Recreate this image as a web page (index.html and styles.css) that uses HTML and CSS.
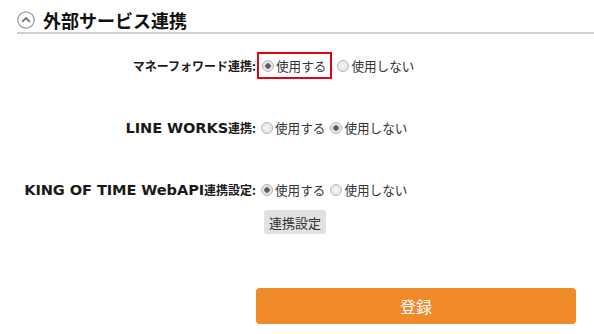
FILE: index.html
```html
<!doctype html>
<html>
    <head>
        <title>外部サービス連携</title>
        <link rel="stylesheet" href="styles.css">
    </head>
    <body>
        <div class="section_head">
            <span class="toggle_icon">
                <svg width="18" height="18" viewBox="0 0 18 18">
                    <circle cx="9" cy="9" r="8.2" fill="#fff" stroke="#a0a0a0" stroke-width="1.3"/>
                    <path d="M5.2 10.8 L9 7 L12.8 10.8" fill="none" stroke="#707070" stroke-width="1.8"/>
                </svg>
            </span>
            <h2>外部サービス連携</h2>
        </div>

        <div class="form_area">
            <div class="form_row">
                <div class="form_label">マネーフォワード連携:</div>
                <div class="form_value">
                    <span class="highlight_box">
                        <label><input type="radio" name="mf" checked>使用する</label>
                    </span><label><input type="radio" name="mf">使用しない</label>
                </div>
            </div>

            <div class="form_row">
                <div class="form_label"><span class="latin">LINE WORKS</span>連携:</div>
                <div class="form_value">
                    <label><input type="radio" name="lw">使用する</label>
                    <label><input type="radio" name="lw" checked>使用しない</label>
                </div>
            </div>

            <div class="form_row short">
                <div class="form_label"><span class="latin">KING OF TIME WebAPI</span>連携設定:</div>
                <div class="form_value">
                    <label><input type="radio" name="kot" checked>使用する</label>
                    <label><input type="radio" name="kot">使用しない</label>
                </div>
            </div>

            <div class="form_row btn_row">
                <div class="form_label"></div>
                <div class="form_value">
                    <button class="small_btn">連携設定</button>
                </div>
            </div>
        </div>

        <div class="submit_area">
            <button class="submit_btn">登録</button>
        </div>
    </body>
</html>
```

FILE: styles.css
```css
body {
    padding: 0;
    margin: 0;
    background-color: #fff;
    font-family: "Noto Sans CJK JP", sans-serif;
    color: #222;
}
.section_head {
    display: flex;
    align-items: center;
    margin-left: 17px;
    padding-top: 9px;
    padding-bottom: 1px;
    border-bottom: 2px solid #cfcfcf;
}
.toggle_icon {
    flex: none;
    width: 18px;
    height: 18px;
    margin-right: 8px;
}
.toggle_icon svg {
    display: block;
}
.section_head h2 {
    margin: 0;
    font-size: 18px;
    font-weight: bold;
    color: #111;
    line-height: 22px;
}
.form_area {
    padding-top: 18px;
}
.form_row {
    display: flex;
    align-items: center;
    height: 27px;
    margin-bottom: 35px;
}
.form_row.short {
    margin-bottom: 7px;
}
.form_row.btn_row {
    height: 24px;
    margin-bottom: 0;
}
.form_label {
    width: 256px;
    text-align: right;
    font-size: 12px;
    font-weight: bold;
    color: #1a1a1a;
}
.form_label .latin {
    font-family: "DejaVu Sans", sans-serif;
    font-size: 14.6px;
    letter-spacing: -0.1px;
}
.form_value {
    display: flex;
    align-items: center;
    font-size: 12.6px;
    color: #333;
}
.form_value label {
    display: flex;
    align-items: center;
}
.form_value input[type=radio] {
    appearance: none;
    -webkit-appearance: none;
    width: 12px;
    height: 12px;
    margin: 0 2px 0 5px;
    border: 1px solid #b5b5b5;
    border-radius: 50%;
    background: radial-gradient(circle, #f4f4f4 0%, #e2e2e2 100%);
    box-sizing: border-box;
}
.form_value input[type=radio]:checked {
    background: radial-gradient(circle, #555 0, #666 2.5px, #e6e6e6 3px, #e6e6e6 100%);
}
.highlight_box {
    display: flex;
    align-items: center;
    height: 27px;
    border: 2px solid #e60012;
    box-sizing: border-box;
    padding-right: 4px;
    margin-left: 1px;
}
.highlight_box input[type=radio] {
    margin-left: 3px;
}
.small_btn {
    margin-left: 8px;
    height: 24px;
    padding: 0 5px;
    border: none;
    border-radius: 3px;
    background-color: #e1e1e1;
    font-size: 13px;
    font-family: "Noto Sans CJK JP", sans-serif;
    color: #333;
}
.submit_area {
    padding-top: 54px;
    padding-left: 256px;
}
.submit_btn {
    width: 320px;
    height: 36px;
    border: none;
    border-radius: 4px;
    background-color: #f08a28;
    color: #fff;
    font-size: 16px;
    font-family: "Noto Sans CJK JP", sans-serif;
}
```
